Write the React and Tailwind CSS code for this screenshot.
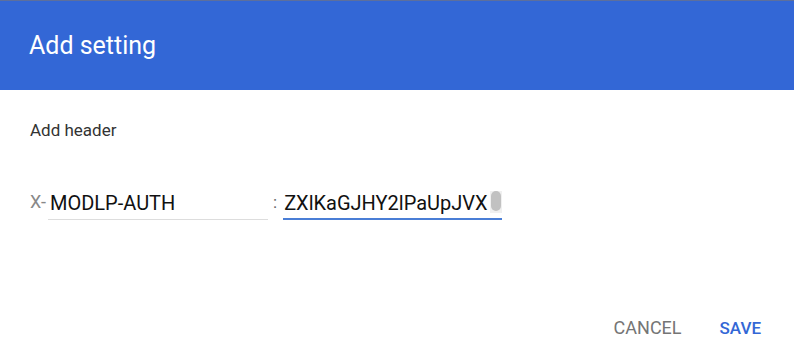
export default function App() {
  return (
    <div className="w-[794px] h-[356px] bg-white overflow-hidden flex flex-col" style={{ fontFamily: 'Roboto, "Liberation Sans", sans-serif' }}>
      <div className="h-[1px] bg-[#5d6f9c]" />
      <div className="h-[89px] bg-[#3367d6] flex items-center pl-[29px] pb-[1px]">
        <span className="text-white text-[25px] leading-none">Add setting</span>
      </div>
      <div className="pl-[30px] pt-[30px] text-[17px] leading-[20px] text-[#333]">Add header</div>
      <div className="flex items-end pl-[30px] mt-[50px] h-[30px]">
        <span className="w-[18px] text-[18px] text-[#888] leading-none mb-[9px]">X-</span>
        <div className="w-[220px] h-[30px] border-b border-[#ddd] flex items-end">
          <span className="text-[20px] text-[#111] leading-none mb-[6px] pl-[2px]">MODLP-AUTH</span>
        </div>
        <span className="ml-[5px] text-[17px] text-[#666] leading-none mb-[9px]">:</span>
        <div className="ml-[6px] w-[219px] h-[30px] border-b-2 border-[#4a7ed6] flex items-end justify-between overflow-hidden">
          <span className="text-[20px] text-[#111] leading-none mb-[5px] pl-[1px] whitespace-nowrap">ZXlKaGJHY2lPaUpJVX</span>
          <div className="shrink-0 w-[12px] h-[22px] self-start mt-[1px] bg-[#f0f0f0] flex justify-center">
            <div className="w-[10px] h-[20px] rounded-full bg-[#c1c1c1]" />
          </div>
        </div>
      </div>
      <div className="flex justify-end items-center gap-[38px] pr-[33px] mt-[99px]">
        <span className="text-[18px] text-[#757575] leading-none">CANCEL</span>
        <span className="text-[17px] font-medium text-[#3367d6] leading-none">SAVE</span>
      </div>
    </div>
  );
}
